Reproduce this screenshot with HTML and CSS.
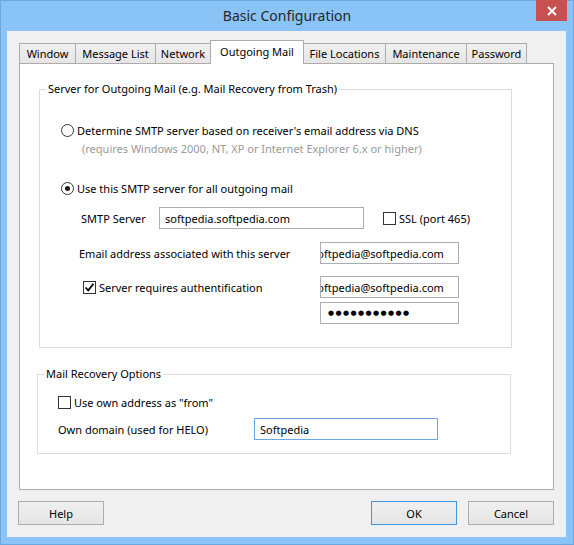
FILE: index.html
```html
<!DOCTYPE html>
<html lang="en">
<head>
    <meta charset="UTF-8">
    <title>Basic Configuration</title>
    <link rel="stylesheet" href="styles.css">
</head>
<body>

<div class="window">
    <div class="titlebar">
        <span class="title">Basic Configuration</span>
        <button class="close" title="Close">
            <svg width="10" height="10" viewBox="0 0 10 10">
                <path d="M1 1 L9 9 M9 1 L1 9" stroke="#fff" stroke-width="2"/>
            </svg>
        </button>
    </div>

    <div class="client">
        <div class="tabs">
            <div class="tab t-window">Window</div>
            <div class="tab t-messages">Message List</div>
            <div class="tab t-network">Network</div>
            <div class="tab t-outgoing active">Outgoing Mail</div>
            <div class="tab t-files">File Locations</div>
            <div class="tab t-maint">Maintenance</div>
            <div class="tab t-password">Password</div>
        </div>

        <div class="panel">
            <fieldset class="group server-group">
                <legend>Server for Outgoing Mail (e.g. Mail Recovery from Trash)</legend>

                <label class="option dns-option"><span class="radio"></span>Determine SMTP server based on receiver's email address via DNS</label>
                <div class="note">(requires Windows 2000, NT, XP or Internet Explorer 6.x or higher)</div>

                <label class="option smtp-option"><span class="radio checked"></span>Use this SMTP server for all outgoing mail</label>

                <div class="field smtp-field">
                    <span class="field-label smtp-label">SMTP Server</span>
                    <div class="textbox smtp-box"><span>softpedia.softpedia.com</span></div>
                    <label class="option ssl-option"><span class="check"></span>SSL (port 465)</label>
                </div>

                <div class="field email-field">
                    <span class="field-label email-label">Email address associated with this server</span>
                    <div class="textbox addr-box scrolled"><span>softpedia@softpedia.com</span></div>
                </div>

                <div class="field auth-field">
                    <label class="option auth-option">
                        <span class="check">
                            <svg width="11" height="11" viewBox="0 0 11 11">
                                <path d="M1.5 5.5 L4.2 8.3 L9.5 1.8" fill="none" stroke="#000" stroke-width="1.8"/>
                            </svg>
                        </span>Server requires authentification
                    </label>
                    <div class="textbox addr-box scrolled"><span>softpedia@softpedia.com</span></div>
                </div>

                <div class="field pass-field">
                    <div class="textbox addr-box"><span class="dots">&#9679;&#9679;&#9679;&#9679;&#9679;&#9679;&#9679;&#9679;&#9679;&#9679;&#9679;</span></div>
                </div>
            </fieldset>

            <fieldset class="group recovery-group">
                <legend>Mail Recovery Options</legend>

                <label class="option from-option"><span class="check"></span>Use own address as "from"</label>

                <div class="field helo-field">
                    <span class="field-label helo-label">Own domain (used for HELO)</span>
                    <div class="textbox helo-box focused"><span>Softpedia</span></div>
                </div>
            </fieldset>
        </div>

        <div class="buttons">
            <button class="btn">Help</button>
            <div class="spacer"></div>
            <button class="btn default">OK</button>
            <button class="btn cancel">Cancel</button>
        </div>
    </div>
</div>

</body>
</html>
```

FILE: styles.css
```css
body {
    margin: 0;
    font-family: "Noto Sans", "Open Sans", sans-serif;
    font-size: 11px;
    color: #000;
}

.window {
    position: relative;
    width: 574px;
    height: 545px;
    box-sizing: border-box;
    background-color: #8ac4f6;
    border: 1px solid #6ea8de;
}

.titlebar {
    height: 30px;
    display: flex;
    align-items: center;
    justify-content: center;
}
.title {
    font-size: 14px;
    color: #262626;
    margin-bottom: 2px;
}
.close {
    position: absolute;
    top: -1px;
    right: 6px;
    width: 31px;
    height: 21px;
    padding: 0;
    border: none;
    background-color: #c75050;
    display: flex;
    align-items: center;
    justify-content: center;
}

.client {
    height: 506px;
    margin: 0 7px 0 6px;
    padding: 9px 0 0 12px;
    box-sizing: border-box;
    background-color: #f0f0f0;
}

/* tabs */
.tabs {
    display: flex;
    align-items: flex-end;
    height: 23px;
}
.tab {
    height: 20px;
    box-sizing: border-box;
    margin-left: -1px;
    padding-bottom: 1px;
    border: 1px solid #acacac;
    border-bottom: none;
    background: linear-gradient(#f0f0f0, #e5e5e5);
    display: flex;
    align-items: center;
    justify-content: center;
    white-space: nowrap;
}
.tab:first-child {
    margin-left: 0;
}
.tab.active {
    position: relative;
    z-index: 1;
    height: 24px;
    margin-bottom: -1px;
    padding-bottom: 3px;
    background: #fff;
}
.t-window { width: 57px; }
.t-messages { width: 81px; }
.t-network { width: 56px; }
.t-outgoing { width: 94px; }
.t-files { width: 83px; }
.t-maint { width: 82px; }
.t-password { width: 61px; }

.panel {
    width: 535px;
    height: 427px;
    box-sizing: border-box;
    border: 1px solid #acacac;
    background-color: #fff;
}

/* group boxes */
.group {
    margin: 0;
    padding: 0;
    box-sizing: border-box;
    border: 1px solid #dcdcdc;
    min-inline-size: 0;
}
.group legend {
    margin-left: 6px;
    padding: 0 2px;
    line-height: 16px;
}
.server-group {
    width: 473px;
    margin: 17px 0 0 19px;
    padding-bottom: 23px;
}
.recovery-group {
    width: 474px;
    margin: 18px 0 0 17px;
    padding-bottom: 13px;
}

.option {
    display: flex;
    align-items: center;
    height: 16px;
    white-space: nowrap;
}
.radio {
    width: 13px;
    height: 13px;
    box-sizing: border-box;
    border: 1px solid #333;
    border-radius: 50%;
    background-color: #fff;
    margin-right: 3px;
    display: flex;
    align-items: center;
    justify-content: center;
    flex-shrink: 0;
}
.radio.checked::after {
    content: "";
    width: 5px;
    height: 5px;
    border-radius: 50%;
    background-color: #1a1a1a;
}
.check {
    width: 13px;
    height: 13px;
    box-sizing: border-box;
    border: 1px solid #333;
    background-color: #fff;
    margin-right: 3px;
    display: flex;
    align-items: center;
    justify-content: center;
    flex-shrink: 0;
}

.dns-option { margin: 25px 0 0 21px; }
.note {
    margin: 3px 0 0 42px;
    line-height: 16px;
    color: #9a9a9a;
}
.smtp-option { margin: 23px 0 0 21px; }

.field {
    display: flex;
    align-items: center;
    height: 22px;
}
.field-label {
    flex-shrink: 0;
    white-space: nowrap;
}
.smtp-field { margin-top: 11px; padding-left: 41px; }
.smtp-label { width: 78px; }
.ssl-option { margin-left: 19px; }

.email-field { margin-top: 13px; padding-left: 39px; }
.email-label { width: 241px; }

.auth-field { margin-top: 12px; padding-left: 43px; }
.auth-option { width: 237px; }

.pass-field { margin-top: 4px; padding-left: 280px; }

.from-option { margin: 12px 0 0 20px; }
.helo-field { margin-top: 8px; padding-left: 20px; }
.helo-label { width: 196px; }

/* text boxes */
.textbox {
    height: 22px;
    box-sizing: border-box;
    border: 1px solid #abadb3;
    background-color: #fff;
    padding: 0 5px;
    display: flex;
    align-items: center;
    overflow: hidden;
    white-space: nowrap;
}
.textbox span {
    flex-shrink: 0;
}
/* text scrolled so the start of the address is cut off */
.textbox.scrolled {
    padding-left: 0;
}
.textbox.scrolled span {
    margin-left: -9px;
}
.textbox.focused {
    border-color: #6aa7e6;
}
.smtp-box { width: 205px; }
.addr-box { width: 139px; }
.helo-box { width: 184px; }
.dots {
    font-family: "DejaVu Sans", sans-serif;
    font-size: 7px;
    letter-spacing: 1.4px;
    margin-left: 2px;
}

/* dialog buttons */
.buttons {
    display: flex;
    width: 536px;
    margin: 11px 0 0 -1px;
}
.spacer {
    flex: 1;
}
.btn {
    width: 86px;
    height: 24px;
    padding: 0;
    border: 1px solid #acacac;
    background: linear-gradient(#f0f0f0, #e5e5e5);
    font-family: inherit;
    font-size: 11px;
    color: #000;
}
.btn.default {
    border-color: #3c95e6;
}
.btn.cancel {
    margin-left: 11px;
}
```
